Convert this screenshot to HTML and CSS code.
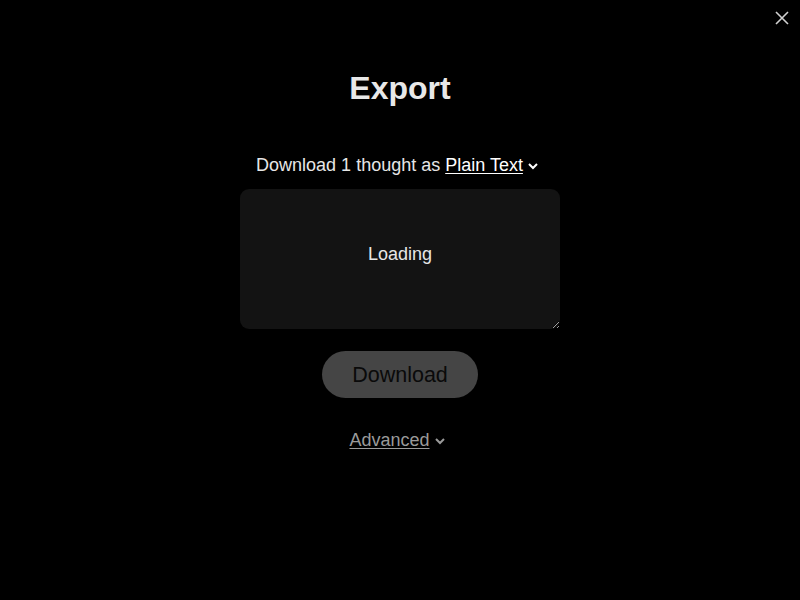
FILE: index.html
```html
<!DOCTYPE html>
<html>
<head>
<meta charset="utf-8">
<link rel="stylesheet" href="styles.css">
</head>
<body>
<button class="close" aria-label="Close">
  <svg width="14" height="14" viewBox="0 0 14 14"><path d="M1 1L13 13M13 1L1 13" stroke="#d0d0d0" stroke-width="1.6" fill="none"/></svg>
</button>
<main class="modal">
  <h1 class="title">Export</h1>
  <div class="format">Download 1 thought as <span class="format-link">Plain Text</span><svg class="chev" width="10" height="8" viewBox="0 0 10 8"><path d="M1 2L5 6L9 2" stroke="#fff" stroke-width="2" fill="none"/></svg></div>
  <textarea class="preview" readonly>Loading</textarea>
  <button class="download">Download</button>
  <div class="advanced"><span class="advanced-link">Advanced</span><svg class="chev" width="10" height="8" viewBox="0 0 10 8"><path d="M1 2L5 6L9 2" stroke="#9a9a9a" stroke-width="2" fill="none"/></svg></div>
</main>
</body>
</html>
```
FILE: styles.css
```css
html, body {
  margin: 0;
  padding: 0;
  background: #000;
  height: 100%;
}
body {
  font-family: "Liberation Sans", Arial, sans-serif;
  color: #e6e6e6;
  position: relative;
}
.close {
  position: absolute;
  top: 11px;
  right: 11px;
  background: none;
  border: 0;
  padding: 0;
  width: 14px;
  height: 14px;
  display: flex;
}
.modal {
  display: flex;
  flex-direction: column;
  align-items: center;
}
.title {
  margin: 68px 0 0;
  font-size: 32px;
  font-weight: bold;
  line-height: 40px;
  color: #e8e8e8;
}
.format {
  margin-top: 45px;
  font-size: 18px;
  line-height: 24px;
  color: #e6e6e6;
}
.format-link {
  color: #fff;
  text-decoration: underline;
  text-underline-offset: 2px;
}
.chev {
  margin-left: 5px;
  margin-right: 6px;
  vertical-align: 1px;
}
.preview {
  margin-top: 12px;
  box-sizing: border-box;
  width: 320px;
  height: 140px;
  background: #131313;
  border: 0;
  border-radius: 9px;
  color: #e6e6e6;
  font-family: "Liberation Sans", Arial, sans-serif;
  font-size: 18px;
  line-height: 24px;
  text-align: center;
  padding: 53px 10px 10px;
  outline: none;
  resize: vertical;
}
.download {
  margin-top: 22px;
  width: 156px;
  height: 47px;
  border: 0;
  border-radius: 24px;
  background: #454545;
  color: #0a0a0a;
  font-family: "Liberation Sans", Arial, sans-serif;
  font-size: 21.5px;
  padding: 2px 0 0;
}
.advanced {
  margin-top: 30px;
  font-size: 18px;
  line-height: 24px;
  color: #9a9a9a;
}
.advanced-link {
  text-decoration: underline;
  text-underline-offset: 2px;
}
```
